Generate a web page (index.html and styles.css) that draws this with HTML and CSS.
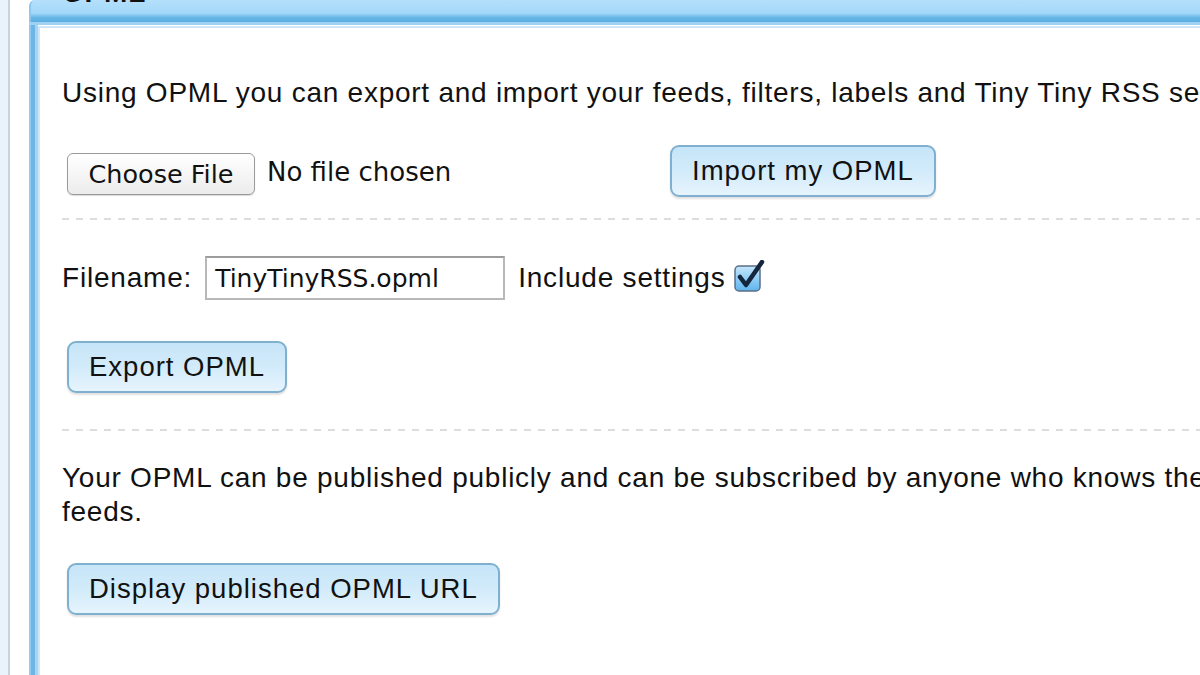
FILE: index.html
```html
<!DOCTYPE html>
<html>
<head>
<meta charset="utf-8">
<link rel="stylesheet" href="styles.css">
</head>
<body>
<div class="page">
  <div class="strip"></div>
  <div class="gap"></div>
  <div class="pane">
    <div class="pane-head"><span class="pane-title">OPML</span></div>
    <div class="pane-body">
      <div class="content">
        <p class="intro">Using OPML you can export and import your feeds, filters, labels and Tiny Tiny RSS settings.</p>
        <div class="row import-row">
          <span class="file-btn">Choose File</span>
          <span class="file-note">No file chosen</span>
          <span class="btn import-btn">Import my OPML</span>
        </div>
        <hr class="sep">
        <div class="row export-row">
          <span class="label">Filename:</span>
          <span class="input">TinyTinyRSS.opml</span>
          <span class="label">Include settings</span>
          <span class="check">
            <svg viewBox="0 0 32 33" width="32" height="33">
              <defs>
                <linearGradient id="cb" x1="0" y1="0" x2="0" y2="1">
                  <stop offset="0" stop-color="#c4e6fb"/>
                  <stop offset="1" stop-color="#5fb4ee"/>
                </linearGradient>
              </defs>
              <rect x="1" y="6" width="25" height="25" rx="4" fill="url(#cb)" stroke="#5b6f86" stroke-width="1.5"/>
              <path d="M6 17 L12 25 L28 2" fill="none" stroke="#14263d" stroke-width="4.5" stroke-linecap="round" stroke-linejoin="round"/>
            </svg>
          </span>
        </div>
        <div class="row">
          <span class="btn">Export OPML</span>
        </div>
        <hr class="sep sep2">
        <p class="publish">Your OPML can be published publicly and can be subscribed by anyone who knows the URL below. Published OPML does not include your Tiny Tiny RSS settings, feeds that require authentication or feeds hidden from Popular<br>feeds.</p>
        <div class="row">
          <span class="btn">Display published OPML URL</span>
        </div>
      </div>
    </div>
  </div>
</div>
</body>
</html>
```

FILE: styles.css
```css
html, body {
  margin: 0;
  padding: 0;
  width: 1200px;
  height: 675px;
  overflow: hidden;
  background: #ffffff;
}

.page {
  display: flex;
  height: 675px;
  font-family: "Liberation Sans", Arial, sans-serif;
  color: #111;
}

.strip {
  width: 8px;
  flex: none;
  background: #e9f3fc;
  border-right: 2px solid #c9d3da;
}

.gap {
  width: 19px;
  flex: none;
  background: #ffffff;
}

.pane {
  flex: 1;
  display: flex;
  flex-direction: column;
  min-width: 0;
}

.pane-head {
  height: 22px;
  flex: none;
  overflow: hidden;
  background: linear-gradient(#b4e0fb 0%, #a3d8f8 60%, #66b6e6 80%, #5aaee0 100%);
  border-left: 2px solid #8cc8ee;
  border-radius: 6px 0 0 0;
}

.pane-title {
  display: block;
  margin-top: -22px;
  margin-left: 31px;
  font-weight: bold;
  font-size: 28px;
  letter-spacing: 0.8px;
  line-height: 30px;
  color: #111;
}

.pane-body {
  flex: 1;
  display: flex;
  background: linear-gradient(90deg, #8fcbf0 0, #8fcbf0 2px, #6db6e6 2px, #6db6e6 6px, #a4d6f4 6px, #a4d6f4 9px, #ffffff 9px);
  padding: 4px 0 0 9px;
  box-shadow: inset 0 3px 0 #9fd2f2;
}

.content {
  flex: 1;
  background: #ffffff;
  padding: 48px 0 0 22px;
  min-width: 0;
  border-left: 2px solid #cfe6f6;
  border-top: 2px solid #cfe6f6;
}

p {
  margin: 0;
  font-size: 28px;
  letter-spacing: 0.75px;
  line-height: 34px;
  white-space: nowrap;
}

.intro {
  margin-bottom: 35px;
}

.row {
  display: flex;
  align-items: center;
}

.import-row {
  height: 52px;
}

.file-btn {
  margin-left: 5px;
  height: 42px;
  width: 188px;
  flex: none;
  box-sizing: border-box;
  border: 1px solid #9a9a9a;
  border-radius: 6px;
  background: linear-gradient(#ffffff, #ececec);
  box-shadow: 0 1px 1px rgba(0,0,0,0.15);
  font-family: "DejaVu Sans", Verdana, sans-serif;
  font-size: 25.5px;
  display: flex;
  align-items: center;
  justify-content: center;
  margin-top: 6px;
}

.file-note {
  font-family: "DejaVu Sans", Verdana, sans-serif;
  font-size: 26px;
  margin-left: 12px;
  margin-top: 2px;
  width: 403px;
  flex: none;
}

.btn {
  display: inline-flex;
  align-items: center;
  height: 52px;
  box-sizing: border-box;
  padding: 0 20px;
  border: 2px solid #7fb0d0;
  border-radius: 9px;
  background: linear-gradient(#c6e5f8 0%, #d2ebfa 50%, #e6f4fd 100%);
  box-shadow: 0 2px 2px rgba(0,0,0,0.12);
  font-size: 27.5px;
  letter-spacing: 1px;
  color: #111;
  margin-left: 5px;
  white-space: nowrap;
}

.import-btn {
  margin-left: 0;
}

.sep {
  margin: 21px 0 0 0;
  border: 0;
  height: 2px;
  background: repeating-linear-gradient(90deg, #dddddd 0, #dddddd 7px, transparent 7px, transparent 14px);
}

.export-row {
  margin-top: 36px;
  height: 44px;
  margin-bottom: 41px;
}

.label {
  font-size: 28px;
  letter-spacing: 0.8px;
  white-space: nowrap;
}

.input {
  margin-left: 13px;
  width: 300px;
  flex: none;
  height: 44px;
  box-sizing: border-box;
  border: 2px solid #b8b8b8;
  border-top-color: #9c9c9c;
  padding-left: 8px;
  font-family: "DejaVu Sans", Verdana, sans-serif;
  font-size: 25px;
  display: flex;
  align-items: center;
  margin-right: 13px;
}

.check {
  margin-left: 8px;
  display: flex;
  margin-top: -4px;
}

.sep2 {
  margin-top: 36px;
  margin-bottom: 30px;
}

.publish {
  margin-bottom: 34px;
}
```
